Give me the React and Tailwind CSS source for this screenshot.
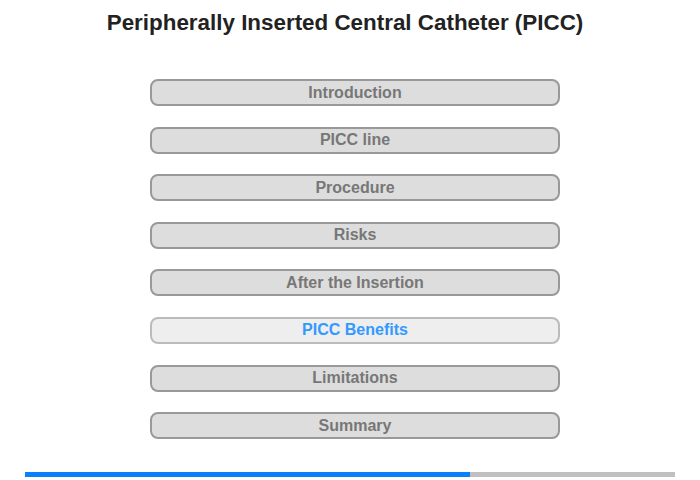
const items = [
    'Introduction',
    'PICC line',
    'Procedure',
    'Risks',
    'After the Insertion',
    'PICC Benefits',
    'Limitations',
    'Summary'
];

const App = () => {
    const active = 'PICC Benefits';

    return (
        <div className="w-[700px] h-[480px] bg-white font-['Liberation_Sans',Arial,sans-serif] relative overflow-hidden">
            <h1 className="pt-[9px] w-[690px] text-center text-[22.4px] leading-[28px] font-bold text-[#222222]">
                Peripherally Inserted Central Catheter (PICC)
            </h1>

            <div className="mt-[42px] ml-[150px] w-[410px] flex flex-col gap-[20.6px]">
                {items.map((item) => {
                    const isActive = item === active;
                    return (
                        <button
                            key={item}
                            className={`h-[27px] w-full rounded-[8px] border-2 text-[16px] font-bold leading-none flex items-center justify-center
                                ${isActive
                                    ? 'bg-[#eeeeee] border-[#bbbbbb] text-[#3399ff]'
                                    : 'bg-[#dddddd] border-[#999999] text-[#777777]'}`}
                        >
                            {item}
                        </button>
                    );
                })}
            </div>

            {/* progress */}
            <div className="absolute left-[25px] top-[472px] w-[650px] h-[5px] bg-[#c0c0c0] flex">
                <div className="h-full w-[445px] bg-[#0a7ffb]" />
            </div>
        </div>
    );
};

export default App;
